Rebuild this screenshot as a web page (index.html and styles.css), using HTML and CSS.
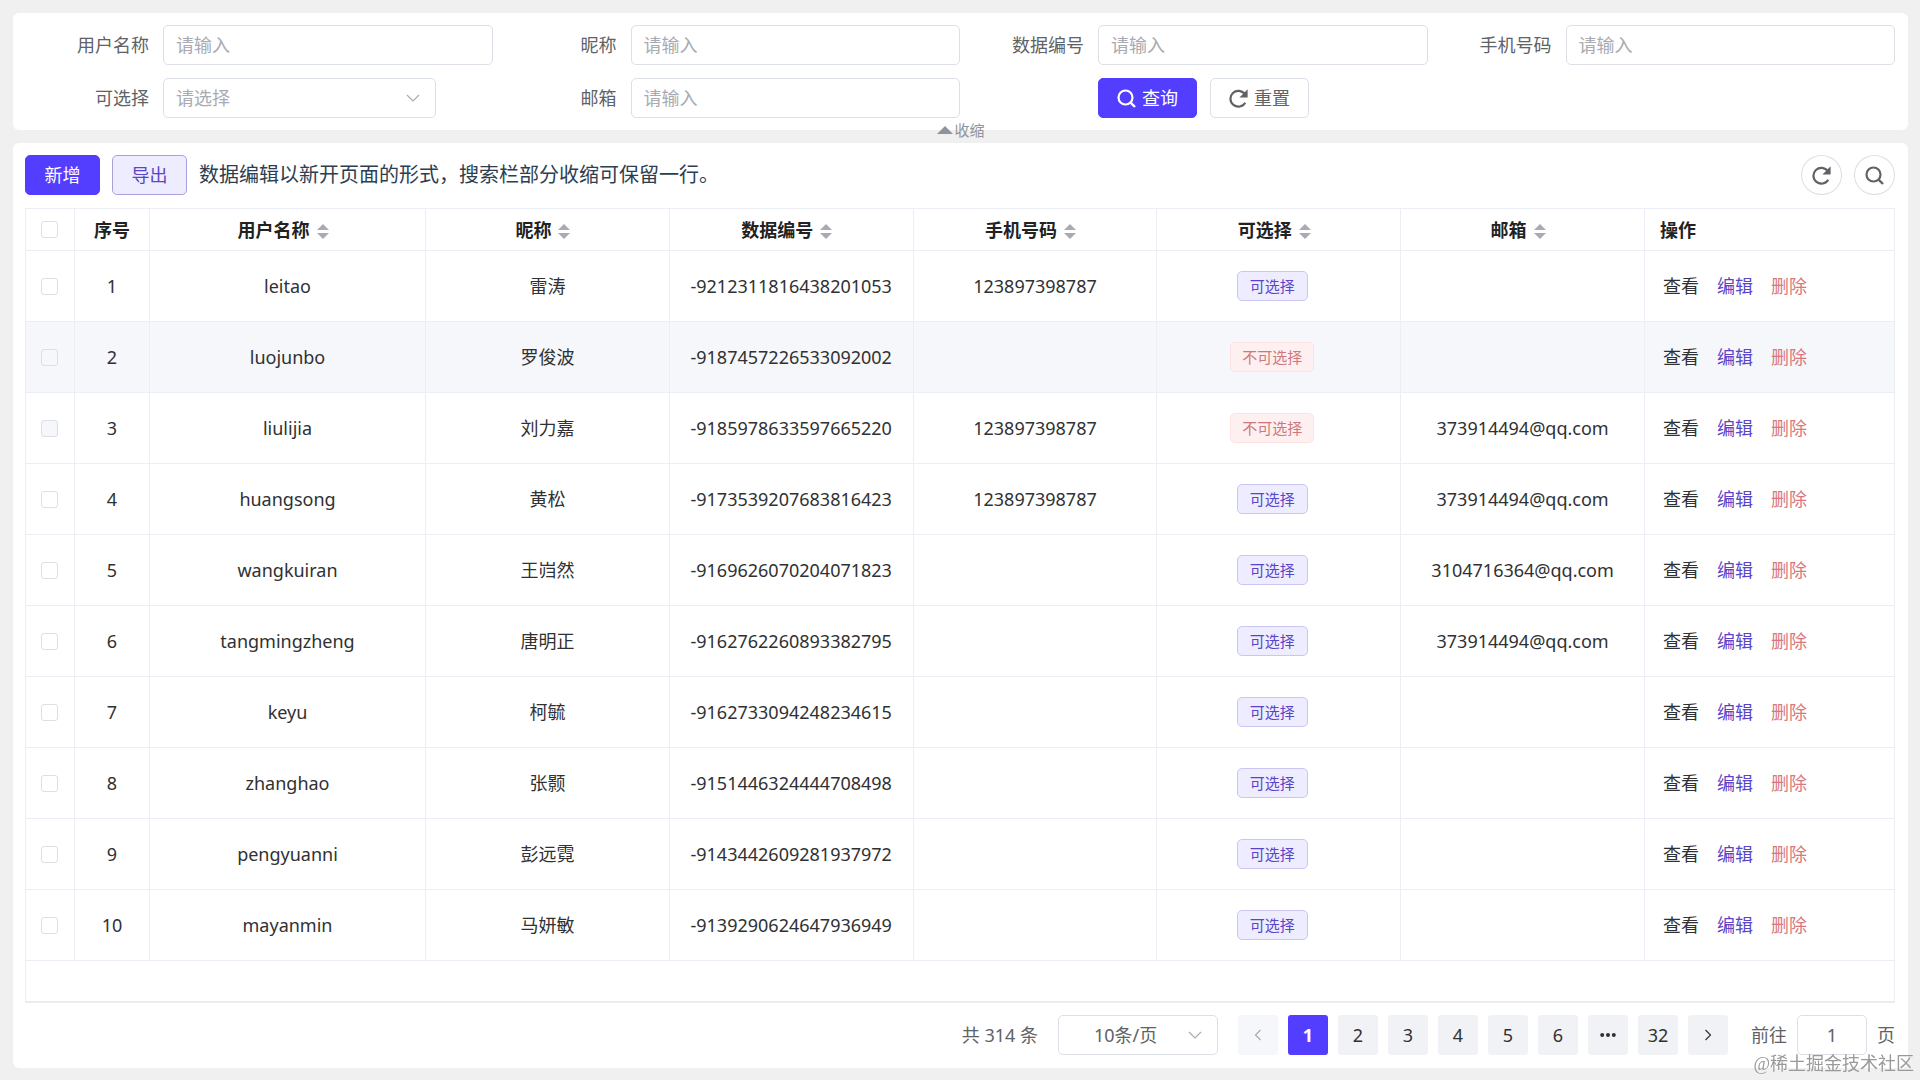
FILE: index.html
```html
<!DOCTYPE html>
<html lang="zh-CN">
<head>
<meta charset="utf-8">
<title>用户列表</title>
<link rel="stylesheet" href="styles.css">
</head>
<body>
<svg class="sprite" aria-hidden="true">
    <symbol id="icon-search" viewBox="0 0 19 19">
        <circle cx="8.500" cy="8.500" r="7" fill="none" stroke="currentColor" stroke-width="2.200"/>
        <path d="M13.300 13.300L18 18" fill="none" stroke="currentColor" stroke-width="2.400"/>
    </symbol>
    <symbol id="icon-refresh" viewBox="110 95 790 790">
        <path d="M785 665A330 330 0 1 1 770 310" fill="none" stroke="currentColor" stroke-width="92"/>
        <path d="M885 110V450H545z" fill="currentColor"/>
    </symbol>
    <symbol id="icon-down" viewBox="0 0 16 16">
        <path d="M2 5l6 6 6-6" fill="none" stroke="currentColor" stroke-width="1.2"/>
    </symbol>
    <symbol id="icon-left" viewBox="0 0 16 16">
        <path d="M10.500 3l-5 5 5 5" fill="none" stroke="currentColor" stroke-width="1.2"/>
    </symbol>
    <symbol id="icon-right" viewBox="0 0 16 16">
        <path d="M5.500 3l5 5-5 5" fill="none" stroke="currentColor" stroke-width="1.2"/>
    </symbol>
    <symbol id="icon-more" viewBox="0 0 16 16">
        <circle cx="2.200" cy="8" r="2" fill="currentColor"/>
        <circle cx="8" cy="8" r="2" fill="currentColor"/>
        <circle cx="13.800" cy="8" r="2" fill="currentColor"/>
    </symbol>
</svg>

<div class="page">
    <section class="card search">
        <form class="search-form">
            <div class="field">
                <label for="userName">用户名称</label>
                <input type="text" id="userName" placeholder="请输入">
            </div>
            <div class="field">
                <label for="nickName">昵称</label>
                <input type="text" id="nickName" placeholder="请输入">
            </div>
            <div class="field">
                <label for="dataNo">数据编号</label>
                <input type="text" id="dataNo" placeholder="请输入">
            </div>
            <div class="field">
                <label for="phone">手机号码</label>
                <input type="text" id="phone" placeholder="请输入">
            </div>
            <div class="field">
                <label for="selectable">可选择</label>
                <div class="select select-field">
                    <select id="selectable" class="empty">
                        <option>请选择</option>
                    </select>
                    <svg class="arrow"><use href="#icon-down"/></svg>
                </div>
            </div>
            <div class="field">
                <label for="email">邮箱</label>
                <input type="text" id="email" placeholder="请输入">
            </div>
            <div class="field search-btns">
                <button type="button" class="btn primary"><svg class="icon"><use href="#icon-search"/></svg>查询</button>
                <button type="button" class="btn"><svg class="icon"><use href="#icon-refresh"/></svg>重置</button>
            </div>
        </form>
        <button type="button" class="collapse"><span class="triangle"></span>收缩</button>
    </section>

    <section class="card list">
        <div class="toolbar">
            <button type="button" class="btn primary">新增</button>
            <button type="button" class="btn plain">导出</button>
            <p class="tip">数据编辑以新开页面的形式，搜索栏部分收缩可保留一行。</p>
            <button type="button" class="btn circle" aria-label="刷新"><svg class="icon"><use href="#icon-refresh"/></svg></button>
            <button type="button" class="btn circle" aria-label="搜索"><svg class="icon"><use href="#icon-search"/></svg></button>
        </div>

        <div class="table-wrap">
            <table>
                <colgroup>
                    <col class="col-check">
                    <col class="col-index">
                    <col class="col-name">
                    <col><col><col><col><col>
                    <col class="col-ops">
                </colgroup>
                <thead>
                    <tr>
                        <th><input type="checkbox" aria-label="全选"></th>
                        <th>序号</th>
                        <th>用户名称<span class="sort"></span></th>
                        <th>昵称<span class="sort"></span></th>
                        <th>数据编号<span class="sort"></span></th>
                        <th>手机号码<span class="sort"></span></th>
                        <th>可选择<span class="sort"></span></th>
                        <th>邮箱<span class="sort"></span></th>
                        <th class="ops-head">操作</th>
                    </tr>
                </thead>
                <tbody id="rows"></tbody>
            </table>
        </div>

        <div class="pagination">
            <span class="total">共 314 条</span>
            <div class="select select-size">
                <select aria-label="每页条数">
                    <option>10条/页</option>
                </select>
                <svg class="arrow"><use href="#icon-down"/></svg>
            </div>
            <div class="pager">
                <button type="button" class="page-btn" disabled aria-label="上一页"><svg><use href="#icon-left"/></svg></button>
                <button type="button" class="page-btn active">1</button>
                <button type="button" class="page-btn">2</button>
                <button type="button" class="page-btn">3</button>
                <button type="button" class="page-btn">4</button>
                <button type="button" class="page-btn">5</button>
                <button type="button" class="page-btn">6</button>
                <button type="button" class="page-btn" aria-label="更多"><svg><use href="#icon-more"/></svg></button>
                <button type="button" class="page-btn">32</button>
                <button type="button" class="page-btn" aria-label="下一页"><svg><use href="#icon-right"/></svg></button>
            </div>
            <div class="jump">
                <label for="jumpTo">前往</label>
                <input type="text" id="jumpTo" value="1">
                <span>页</span>
            </div>
        </div>
    </section>
</div>
<div class="watermark">@稀土掘金技术社区</div>
<script src="script.js"></script>
</body>
</html>
```

FILE: styles.css
```css
* {
    box-sizing: border-box;
}

body {
    margin: 0;
    background: #f0f0f0;
    color: #303133;
    font-family: "Noto Sans", "Noto Sans CJK SC", sans-serif;
    font-size: 18px;
    line-height: 24px;
}

button,
input,
select {
    font: inherit;
    color: inherit;
}

.sprite {
    display: none;
}

.page {
    display: flex;
    flex-direction: column;
    gap: 13px;
    min-height: 100vh;
    padding: 13px 12px 12px 13px;
}

.card {
    position: relative;
    padding: 12px 13px 12px 12px;
    background: #fff;
    border-radius: 6px;
}

/* search form */
.search-form {
    display: grid;
    grid-template-columns: repeat(4, 1fr);
    row-gap: 13px;
}

.field {
    display: flex;
    align-items: center;
}

.field label {
    width: 138px;
    padding-right: 14px;
    text-align: right;
    color: #606266;
}

input[type="text"],
select {
    height: 40px;
    padding: 0 12px;
    background: #fff;
    border: 1px solid #dcdfe6;
    border-radius: 5px;
    outline: none;
}

.field input {
    flex: 1;
    min-width: 0;
}

input::placeholder,
select.empty {
    color: #a8abb2;
}

.select {
    position: relative;
}

.select select {
    width: 100%;
    appearance: none;
}

.select .arrow {
    position: absolute;
    top: 12px;
    right: 15px;
    width: 16px;
    height: 16px;
    color: #a8abb2;
    pointer-events: none;
}

.select-field {
    width: 273px;
}

.search-btns {
    gap: 13px;
    padding-left: 138px;
}

.btn {
    display: flex;
    align-items: center;
    justify-content: center;
    gap: 6px;
    min-width: 75px;
    height: 40px;
    padding: 0 18px;
    background: #fff;
    border: 1px solid #dcdfe6;
    border-radius: 5px;
    color: #606266;
    white-space: nowrap;
}

.btn .icon {
    width: 19px;
    height: 19px;
}

.btn.primary {
    background: #533dff;
    border-color: #533dff;
    color: #fff;
}

.btn.plain {
    background: #eeecff;
    border-color: #a9a0dc;
    color: #5a45c8;
}

.btn.circle {
    min-width: 0;
    width: 41px;
    padding: 0;
    border-radius: 50%;
}

/* sits on the lower edge of the search card */
.collapse {
    position: absolute;
    left: 50%;
    bottom: -10px;
    transform: translateX(-50%);
    display: flex;
    align-items: center;
    gap: 2px;
    padding: 0;
    background: none;
    border: 0;
    color: #909399;
    font-size: 15px;
    line-height: 20px;
}

.triangle {
    border: 8px solid transparent;
    border-top: 0;
    border-bottom-color: #909399;
}

/* list */
.list {
    flex: 1;
    display: flex;
    flex-direction: column;
    padding-bottom: 13px;
}

.toolbar {
    display: flex;
    align-items: center;
    gap: 12px;
    margin-bottom: 13px;
}

.tip {
    flex: 1;
    margin: 0;
    font-size: 20px;
    color: #2c3e50;
}

.table-wrap {
    flex: 1;
    border: 1px solid #ebeef5;
    border-bottom: 2px solid #ebeced;
}

table {
    width: 100%;
    table-layout: fixed;
    border-collapse: separate;
    border-spacing: 0;
}

.col-check {
    width: 49px;
}

.col-index {
    width: 75px;
}

.col-name {
    width: 276px;
}

.col-ops {
    width: 249px;
}

th,
td {
    padding: 0;
    border-right: 1px solid #ebeef5;
    border-bottom: 1px solid #ebeef5;
    text-align: center;
}

th:last-child,
td:last-child {
    border-right: 0;
}

th {
    height: 42px;
    color: #222;
}

td {
    height: 71px;
}

tr.hover td {
    background: #f5f7fa;
}

.sort {
    display: inline-flex;
    flex-direction: column;
    gap: 3px;
    margin: 0 9px 0 7px;
    vertical-align: middle;
}

.sort::before,
.sort::after {
    content: "";
    border: 6px solid transparent;
}

.sort::before {
    border-top: 0;
    border-bottom-color: #a8abb2;
}

.sort::after {
    border-bottom: 0;
    border-top-color: #a8abb2;
}

input[type="checkbox"] {
    appearance: none;
    display: block;
    width: 17px;
    height: 17px;
    margin: 0 0 0 15px;
    background: #fff;
    border: 1px solid #dcdfe6;
    border-radius: 3px;
}

input[type="checkbox"]:disabled {
    background: #f5f7fa;
}

.tag {
    display: inline-block;
    padding: 0 12px;
    margin-right: 13px;
    background: #eeecff;
    border: 1px solid #cbc5f2;
    border-radius: 5px;
    color: #5a45c8;
    font-size: 15px;
    line-height: 28px;
    vertical-align: middle;
}

.tag.danger {
    padding: 0 11px;
    background: #fef0f0;
    border-color: #fde2e2;
    color: #d0777b;
}

th.ops-head {
    padding-left: 15px;
    text-align: left;
}

.ops {
    display: flex;
    gap: 18px;
    padding-left: 18px;
}

.ops a {
    color: #303133;
    text-decoration: none;
}

.ops a.edit {
    color: #5a45c8;
}

.ops a.del {
    color: #d9777b;
}

/* pagination */
.pagination {
    display: flex;
    align-items: center;
    justify-content: flex-end;
    gap: 20px;
    padding-top: 12px;
    color: #606266;
}

.select-size {
    width: 160px;
}

.select-size select {
    padding: 0 35px;
}

.pager {
    display: flex;
    gap: 10px;
}

.page-btn {
    display: flex;
    align-items: center;
    justify-content: center;
    width: 40px;
    height: 40px;
    padding: 0;
    background: #f0f2f5;
    border: 0;
    border-radius: 3px;
    color: #303133;
}

.page-btn svg {
    width: 16px;
    height: 16px;
}

.page-btn:disabled {
    background: #f5f7fa;
    color: #a8abb2;
}

.page-btn.active {
    background: #533dff;
    color: #fff;
    font-weight: bold;
}

.jump {
    display: flex;
    align-items: center;
    gap: 10px;
    padding-left: 3px;
}

.jump input {
    width: 70px;
    text-align: center;
}

.watermark {
    position: fixed;
    right: 6px;
    bottom: 4px;
    color: #999;
    font-family: "Liberation Serif", "Noto Sans CJK SC", serif;
    font-size: 18px;
}
```

FILE: script.js
```js
var rows = [
    { name: "leitao", nick: "雷涛", no: "-9212311816438201053", phone: "123897398787", ok: true, email: "" },
    { name: "luojunbo", nick: "罗俊波", no: "-9187457226533092002", phone: "", ok: false, email: "", hover: true },
    { name: "liulijia", nick: "刘力嘉", no: "-9185978633597665220", phone: "123897398787", ok: false, email: "373914494@qq.com" },
    { name: "huangsong", nick: "黄松", no: "-9173539207683816423", phone: "123897398787", ok: true, email: "373914494@qq.com" },
    { name: "wangkuiran", nick: "王岿然", no: "-9169626070204071823", phone: "", ok: true, email: "3104716364@qq.com" },
    { name: "tangmingzheng", nick: "唐明正", no: "-9162762260893382795", phone: "", ok: true, email: "373914494@qq.com" },
    { name: "keyu", nick: "柯毓", no: "-9162733094248234615", phone: "", ok: true, email: "" },
    { name: "zhanghao", nick: "张颢", no: "-9151446324444708498", phone: "", ok: true, email: "" },
    { name: "pengyuanni", nick: "彭远霓", no: "-9143442609281937972", phone: "", ok: true, email: "" },
    { name: "mayanmin", nick: "马妍敏", no: "-9139290624647936949", phone: "", ok: true, email: "" }
];

var html = "";
rows.forEach(function (row, i) {
    html += "<tr" + (row.hover ? ' class="hover"' : "") + ">" +
        '<td><input type="checkbox" aria-label="选择' + row.name + '"' + (row.ok ? "" : " disabled") + "></td>" +
        "<td>" + (i + 1) + "</td>" +
        "<td>" + row.name + "</td>" +
        "<td>" + row.nick + "</td>" +
        "<td>" + row.no + "</td>" +
        "<td>" + row.phone + "</td>" +
        "<td>" + (row.ok ? '<span class="tag">可选择</span>' : '<span class="tag danger">不可选择</span>') + "</td>" +
        "<td>" + row.email + "</td>" +
        '<td><div class="ops"><a href="#">查看</a><a href="#" class="edit">编辑</a><a href="#" class="del">删除</a></div></td>' +
        "</tr>";
});
document.getElementById("rows").innerHTML = html;
```
